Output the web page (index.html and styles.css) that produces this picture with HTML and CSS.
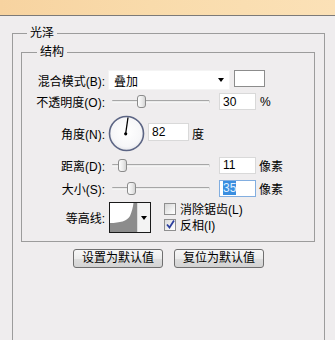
FILE: index.html
```html
<!DOCTYPE html>
<html lang="zh-CN">
<head>
<meta charset="utf-8">
<title>光泽</title>
<link rel="stylesheet" href="styles.css">
</head>
<body>
<div class="titlebar"></div>
<div class="panel">
  <fieldset class="group outer">
    <legend>光泽</legend>
    <fieldset class="group inner">
      <legend>结构</legend>
      <div class="form">
        <span class="lbl">混合模式(B):</span>
        <div class="ctl">
          <div class="select"><span>叠加</span><i class="caret"></i></div>
          <div class="swatch"></div>
        </div>

        <span class="lbl">不透明度(O):</span>
        <div class="ctl">
          <div class="slider"><div class="track"></div><div class="thumb" style="left:25px"></div></div>
          <div class="num">30</div><span class="unit pct">%</span>
        </div>

        <span class="lbl">角度(N):</span>
        <div class="ctl">
          <svg class="dial" width="37" height="37" viewBox="0 0 37 37">
            <defs>
              <radialGradient id="dg" cx="50%" cy="45%" r="55%">
                <stop offset="0" stop-color="#ffffff"/>
                <stop offset="0.8" stop-color="#f6f6f8"/>
                <stop offset="1" stop-color="#e4e5ea"/>
              </radialGradient>
            </defs>
            <circle cx="18.5" cy="18.5" r="17" fill="url(#dg)" stroke="#5c6584" stroke-width="1.6"/>
            <line x1="17.7" y1="18.5" x2="20" y2="2.5" stroke="#000" stroke-width="1.3"/>
            <circle cx="17.7" cy="18.8" r="1.6" fill="#000"/>
          </svg>
          <div class="num angle">82</div><span class="unit">度</span>
        </div>

        <span class="lbl">距离(D):</span>
        <div class="ctl">
          <div class="slider"><div class="track"></div><div class="thumb" style="left:6px"></div></div>
          <div class="num">11</div><span class="unit">像素</span>
        </div>

        <span class="lbl">大小(S):</span>
        <div class="ctl">
          <div class="slider"><div class="track"></div><div class="thumb" style="left:15px"></div></div>
          <div class="num focus"><span class="sel">35</span></div><span class="unit">像素</span>
        </div>

        <span class="lbl">等高线:</span>
        <div class="ctl">
          <div class="contour">
            <svg class="curve" width="27" height="29" viewBox="0 0 27 29">
              <rect width="27" height="29" fill="#ffffff"/>
              <path d="M0 20 C10 20 17 18 20 13 C22 8 23 4 23.5 0 L27 0 L27 29 L0 29 Z" fill="#8c8c8c"/>
            </svg>
            <div class="cbtn"><i class="caret"></i></div>
          </div>
          <div class="checks">
            <div class="check"><span class="box"></span><span>消除锯齿(L)</span></div>
            <div class="check"><span class="box on"><svg width="9" height="9" viewBox="0 0 9 9"><path d="M1 4.5 L3.5 7.5 L8 0.5" fill="none" stroke="#2c3f9e" stroke-width="1.8"/></svg></span><span>反相(I)</span></div>
          </div>
        </div>
      </div>
    </fieldset>
    <div class="buttons">
      <button class="btn">设置为默认值</button>
      <button class="btn">复位为默认值</button>
    </div>
  </fieldset>
</div>
</body>
</html>
```

FILE: styles.css
```css
* { box-sizing: border-box; }

html, body { height: 100%; }

body {
  margin: 0;
  background: #efedee;
  font-family: "Liberation Sans", "Noto Sans CJK SC", sans-serif;
  font-size: 12px;
  color: #000;
  overflow: hidden;
  display: flex;
  flex-direction: column;
}

.titlebar {
  flex: none;
  height: 16px;
  background: linear-gradient(to right, #f7d3a0, #f9dbab 45%, #fbe1b7);
  border-bottom: 1px solid #7c7a78;
}

.panel {
  flex: 1;
  display: flex;
  flex-direction: column;
  padding: 10px 10px 0 12px;
}

.group {
  margin: 0;
  border: 1px solid #9c9c9c;
  min-width: 0;
}

.group > legend {
  font-size: 12px;
  line-height: 14px;
  padding: 0 3px;
}

.outer {
  flex: 1;
  padding: 0 9px 0 8px;
  border-bottom-width: 0;
}

.outer > legend { margin-left: 6px; }

.inner {
  margin-top: 5px;
  padding: 11px 0 6px 0;
}

.inner > legend { margin-left: 15px; }

.form {
  display: grid;
  grid-template-columns: 83px 1fr;
  grid-template-rows: 20px 23px 40px 24px 22px 36px;
  column-gap: 3px;
}

.lbl {
  display: flex;
  align-items: center;
  justify-content: flex-end;
  white-space: nowrap;
}

.ctl {
  display: flex;
  align-items: center;
}

.select {
  width: 122px;
  height: 20px;
  background: #fff;
  border: 1px solid #f4f4f4;
  display: flex;
  align-items: center;
  justify-content: space-between;
  padding: 0 5px 0 5px;
}

.caret {
  display: block;
  width: 0;
  height: 0;
  border-left: 3.5px solid transparent;
  border-right: 3.5px solid transparent;
  border-top: 4px solid #000;
}

.swatch {
  width: 31px;
  height: 17px;
  margin-left: 4px;
  margin-top: -4px;
  background: #fff;
  border: 1px solid #8c8c8c;
}

.slider {
  position: relative;
  width: 98px;
  height: 13px;
  margin-left: 4px;
  display: flex;
  align-items: center;
}

.track {
  width: 100%;
  height: 3px;
  border-radius: 1px;
  background: linear-gradient(#a6a6a6, #a6a6a6 1px, #e6e6e6 1px, #fafafa);
  border-right: 1px solid #d2d2d2;
}

.thumb {
  position: absolute;
  top: 0;
  width: 9px;
  height: 13px;
  border: 1px solid #8b8b8b;
  border-radius: 3px;
  background: linear-gradient(to right, #fdfdfd, #e9e9e9 60%, #d4d4d4);
}

.num {
  width: 37px;
  height: 17px;
  margin-left: 9px;
  background: #fff;
  border: 1px solid #d9d9d9;
  padding-left: 3px;
  display: flex;
  align-items: center;
  line-height: 14px;
}

.num.angle {
  width: 41px;
  height: 18px;
  margin-left: 3px;
  margin-top: -2px;
}

.num.focus {
  border-color: #82aee0;
}

.sel {
  background: #3a8ee0;
  color: #dfeeff;
}

.unit {
  margin-left: 3px;
}

.unit.pct { margin-left: 4px; }

.dial {
  display: block;
  margin-left: 0;
}

.contour {
  display: flex;
  width: 42px;
  height: 31px;
  margin-left: 1px;
  border: 1px solid #1a1a1a;
  background: #f3f3f3;
}

.curve {
  display: block;
}

.cbtn {
  flex: 1;
  display: flex;
  align-items: center;
  justify-content: center;
  padding-top: 1px;
  border-left: 1px solid #dcdcdc;
}

.checks {
  display: flex;
  flex-direction: column;
  gap: 2px;
  margin-left: 13px;
  margin-top: -1px;
}

.check {
  display: flex;
  align-items: center;
  gap: 4px;
  height: 14px;
}

.box {
  width: 12px;
  height: 12px;
  border: 1px solid #8f8f8f;
  background: linear-gradient(135deg, #d6d6d6, #f4f4f4 70%, #fff);
  display: flex;
  align-items: center;
  justify-content: center;
}

.box.on {
  background: linear-gradient(135deg, #dadada, #f6f6f6 70%, #fff);
}

.box svg { display: block; }

.buttons {
  display: flex;
  justify-content: center;
  gap: 11px;
  margin-top: 7px;
  padding-left: 1px;
}

.btn {
  width: 90px;
  height: 19px;
  padding: 0;
  margin: 0;
  font-family: "Liberation Sans", "Noto Sans CJK SC", sans-serif;
  font-size: 12px;
  line-height: 15px;
  color: #000;
  border: 1px solid #6f6f6f;
  border-radius: 3px;
  background: linear-gradient(#f7f7f7, #ececec 50%, #dedede 51%, #d3d3d3);
}
```
